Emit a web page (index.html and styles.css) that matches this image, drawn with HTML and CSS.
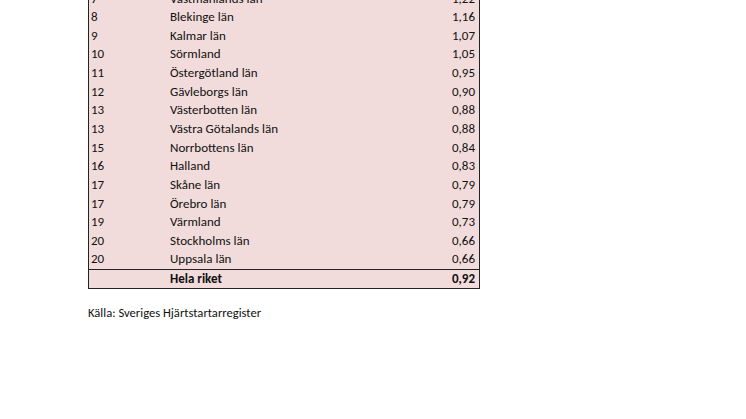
FILE: index.html
```html
<!DOCTYPE html>
<html lang="sv">
<head>
<meta charset="utf-8">
<link rel="stylesheet" href="styles.css">
</head>
<body>
<div class="page">
<table class="stats">
<tbody>
<tr><td class="rank">7</td><td class="name">Västmanlands län</td><td class="val">1,22</td></tr>
<tr><td class="rank">8</td><td class="name">Blekinge län</td><td class="val">1,16</td></tr>
<tr><td class="rank">9</td><td class="name">Kalmar län</td><td class="val">1,07</td></tr>
<tr><td class="rank">10</td><td class="name">Sörmland</td><td class="val">1,05</td></tr>
<tr><td class="rank">11</td><td class="name">Östergötland län</td><td class="val">0,95</td></tr>
<tr><td class="rank">12</td><td class="name">Gävleborgs län</td><td class="val">0,90</td></tr>
<tr><td class="rank">13</td><td class="name">Västerbotten län</td><td class="val">0,88</td></tr>
<tr><td class="rank">13</td><td class="name">Västra Götalands län</td><td class="val">0,88</td></tr>
<tr><td class="rank">15</td><td class="name">Norrbottens län</td><td class="val">0,84</td></tr>
<tr><td class="rank">16</td><td class="name">Halland</td><td class="val">0,83</td></tr>
<tr><td class="rank">17</td><td class="name">Skåne län</td><td class="val">0,79</td></tr>
<tr><td class="rank">17</td><td class="name">Örebro län</td><td class="val">0,79</td></tr>
<tr><td class="rank">19</td><td class="name">Värmland</td><td class="val">0,73</td></tr>
<tr><td class="rank">20</td><td class="name">Stockholms län</td><td class="val">0,66</td></tr>
<tr><td class="rank">20</td><td class="name">Uppsala län</td><td class="val">0,66</td></tr>
<tr class="total"><td class="rank"></td><td class="name">Hela riket</td><td class="val">0,92</td></tr>
</tbody>
</table>
<p class="source">Källa: Sveriges Hjärtstartarregister</p>
</div>
</body>
</html>
```

FILE: styles.css
```css
html, body {
  margin: 0;
  padding: 0;
  background: #ffffff;
}
body {
  font-family: "Carlito", "Liberation Sans", sans-serif;
  color: #111111;
}
.page {
  padding-left: 88px;
  margin-top: -10.8px;
}
.stats {
  border-collapse: collapse;
  width: 392px;
  background: #f2dcdb;
  border-left: 1px solid #222;
  border-right: 1px solid #222;
  border-bottom: 1px solid #222;
  font-size: 13px;
}
.stats td {
  height: 18.65px;
  padding: 0;
  line-height: 18px;
  white-space: nowrap;
}
.rank {
  width: 79px;
  padding-left: 2px !important;
}
.name {
  width: 220px;
}
.val {
  text-align: right;
  padding-right: 4px !important;
}
.total td {
  border-top: 1px solid #222;
  font-weight: bold;
}
.source {
  margin: 16px 0 0 0;
  font-size: 12.6px;
}
```
